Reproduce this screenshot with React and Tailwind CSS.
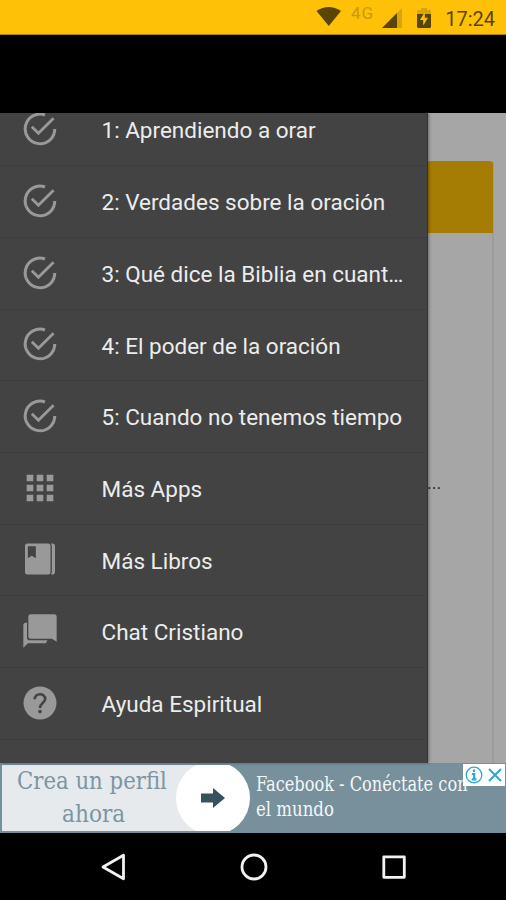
import React from "react";

const CheckIcon = () => (
  <svg viewBox="0 0 40 40" className="size-10" fill="none" stroke="currentColor">
    <path d="M25 6A14.8 14.8 0 1 0 34.8 20" strokeWidth="3" />
    <path d="M11.8 17.7L18.4 24.2L33.6 9.2" strokeWidth="2.8" />
  </svg>
);

const HelpIcon = () => (
  <svg viewBox="0 0 40 40" className="size-10">
    <circle cx="20" cy="20" r="16.5" fill="currentColor" />
    <path d="M14.8 16.2C14.8 9.6 25.2 9.600 25.200 16C25.200 19.600 20 20 20 25" fill="none" stroke="#434343" strokeWidth="2.600" />
    <circle cx="20" cy="28.600" r="1.800" fill="#434343" />
  </svg>
);

const MdIcon = ({ d }) => (
  <svg viewBox="0 0 24 24" className="size-10" fill="currentColor">
    <path d={d} fillRule="evenodd" />
  </svg>
);

const APPS =
  "M4 8h4V4H4v4zm6 12h4v-4h-4v4zm-6 0h4v-4H4v4zm0-6h4v-4H4v4zm6 0h4v-4h-4v4zm6-10v4h4V4h-4zm-6 4h4V4h-4v4zm6 6h4v-4h-4v4zm0 6h4v-4h-4v4z";
const BOOK =
  "M4.5 2.7h12.300a1.500 1.500 0 0 1 1.500 1.500v15.600a1.500 1.500 0 0 1-1.500 1.500h-12.300a1.500 1.500 0 0 1-1.500-1.500V4.200a1.500 1.500 0 0 1 1.500-1.500zM4.700 4.300v7.200l2.400-1.500 2.400 1.500v-7.200zM18.500 2.700h.8a1.700 1.700 0 0 1 1.700 1.700v15.200a1.700 1.700 0 0 1-1.700 1.700h-.8q.6-.7.6-1.700V4.400q0-1-.6-1.700z";
const CHAT =
  "M6.500 2h14a1.500 1.500 0 0 1 1.500 1.500V18.500l-2.800-1.900H6.500A1.500 1.500 0 0 1 5 15.100V3.500A1.500 1.500 0 0 1 6.500 2zM4.200 7v8.900a1.700 1.700 0 0 0 1.700 1.700H16.500l-1 1.700H4.800L2 22V8.500A1.500 1.500 0 0 1 3.500 7z";

const items = [
  { label: "1: Aprendiendo a orar", icon: <CheckIcon /> },
  { label: "2: Verdades sobre la oración", icon: <CheckIcon /> },
  { label: "3: Qué dice la Biblia en cuant…", icon: <CheckIcon /> },
  { label: "4: El poder de la oración", icon: <CheckIcon /> },
  { label: "5: Cuando no tenemos tiempo", icon: <CheckIcon /> },
  { label: "Más Apps", icon: <MdIcon d={APPS} /> },
  { label: "Más Libros", icon: <MdIcon d={BOOK} /> },
  { label: "Chat Cristiano", icon: <MdIcon d={CHAT} /> },
  { label: "Ayuda Espiritual", icon: <HelpIcon /> },
];

function StatusBar() {
  return (
    <header className="flex h-[35px] shrink-0 items-center border-b border-[#a98108] bg-[#ffc107] pr-[11px] pl-[316px] text-[#5a4509]">
      <svg viewBox="0 0 26 20" className="h-5 w-[26px]" fill="currentColor">
        <path d="M.5 4Q12.500-4 25 4L12.800 19z" />
      </svg>
      <span className="ml-[9px] -mt-[7px] w-[24px] text-[17px] leading-none tracking-[1px] text-[#c79a12]">4G</span>
      <svg viewBox="0 0 20 20" className="ml-[7px] mt-[2px] size-5">
        <path d="M0 20L20 0V20z" fill="#d6a50a" />
        <path d="M0 20L15 5V20z" fill="#5a4509" />
      </svg>
      <svg viewBox="0 0 14 20" className="ml-[15px] mt-px h-5 w-[14px]">
        <path d="M0 3.500a1.500 1.500 0 0 1 1.500-1.500H4V0h6v2h2.500A1.500 1.500 0 0 1 14 3.500V8H0z" fill="#d6a50a" />
        <path d="M0 6H14V18.500a1.500 1.500 0 0 1-1.500 1.500h-11A1.500 1.500 0 0 1 0 18.500z" fill="#5a4509" />
        <path d="M7.800 4L3 12h3.200v5.500L11 9.800H7.800z" fill="#ffc107" />
      </svg>
      <span className="ml-auto pt-[3px] text-[20px] leading-none">17:24</span>
    </header>
  );
}

function Drawer() {
  return (
    <nav className="z-10 w-[428px] shrink-0 overflow-hidden border-r border-[#333] bg-[#434343] shadow-[1px_0_3px_rgba(0,0,0,0.35)]">
      <ul className="-mt-[18px]">
        {items.map((item) => (
          <li key={item.label} className="flex h-[71.700px] items-center border-b border-[#3d3d3d] pl-5">
            <span className="-mt-px text-[#999]">{item.icon}</span>
            <span className="ml-[41.500px] whitespace-nowrap pt-[1.800px] text-[22.500px] leading-none text-[#ececec]">{item.label}</span>
          </li>
        ))}
      </ul>
    </nav>
  );
}

function AdBanner() {
  return (
    <section className="relative flex h-[70.500px] shrink-0 border-y-2 border-l-2 border-[#70919d] bg-[#78909c] font-['DejaVu_Serif_Condensed','DejaVu_Serif',serif]">
      <div className="flex w-[213px] shrink-0 flex-col bg-[#e6eaed] text-[25px] leading-[33px] text-[#7b96a1]">
        <span className="-mt-px ml-[15px] origin-left scale-x-[0.945] whitespace-nowrap">Crea un perfil</span>
        <span className="ml-[60px] origin-left scale-x-[0.965] whitespace-nowrap">ahora</span>
      </div>
      <div className="-ml-[39px] flex h-full w-[74px] shrink-0 items-center justify-center overflow-hidden">
        <div className="flex size-[74px] shrink-0 items-center justify-center rounded-full bg-white">
          <svg viewBox="0 0 24 20" className="h-5 w-6" fill="#37515d">
            <path d="M0 5.500H12V0L24 10L12 20V14.500H0z" />
          </svg>
        </div>
      </div>
      <div className="ml-[6px] flex flex-col pt-[7px] text-[20px] leading-[25px] text-[#f4f7f8]">
        <span className="origin-left scale-x-[0.900] whitespace-nowrap">Facebook - Conéctate con</span>
        <span className="origin-left scale-x-[0.920] whitespace-nowrap">el mundo</span>
      </div>
      <div className="absolute -top-px right-px flex h-[22px] w-[42px] items-center justify-between bg-white px-[2px]">
        <svg viewBox="0 0 18 18" className="size-[18px]" fill="none" stroke="#2fa9cc">
          <circle cx="9" cy="9" r="7.800" strokeWidth="1.300" />
          <path d="M9 3.500V6M7 8H9.200V13.200M6.800 13.300H11.500" strokeWidth="2.200" />
        </svg>
        <svg viewBox="0 0 14 14" className="mr-px size-[14px]" fill="none" stroke="#2fa9cc" strokeWidth="2">
          <path d="M1 1L13 13M13 1L1 13" />
        </svg>
      </div>
    </section>
  );
}

function NavBar() {
  return (
    <footer className="flex flex-1 items-start bg-black pt-[20px] pl-[100px]">
      <svg viewBox="0 0 28 28" className="size-7" fill="none" stroke="#f2f2f2" strokeWidth="2.800" strokeLinejoin="round">
        <path d="M3 14L23.500 2.200V25.800z" />
      </svg>
      <svg viewBox="0 0 28 28" className="ml-[111.500px] size-7" fill="none" stroke="#f2f2f2" strokeWidth="2.800">
        <circle cx="14" cy="14" r="12" />
      </svg>
      <svg viewBox="0 0 28 28" className="ml-[112.500px] size-7" fill="none" stroke="#f2f2f2" strokeWidth="2.800" strokeLinejoin="round">
        <path d="M3.800 3.800H24.300V24.300H3.800z" />
      </svg>
    </footer>
  );
}

export default function App() {
  return (
    <div className="flex h-[900px] w-[506px] flex-col overflow-hidden bg-black font-['Roboto','Noto_Sans',sans-serif]">
      <StatusBar />
      <div className="h-[77.500px] shrink-0 bg-black" />
      <div className="flex h-[650px] shrink-0 bg-[#a6a6a6]">
        <Drawer />
        <main className="min-w-0 flex-1 pt-[48.500px] pr-[12px]">
          <div className="h-[610px] border-r-2 border-[#9c9c9c]">
            <div className="-mr-px h-[71.500px] rounded-tr-sm bg-[#a67d04]" />
            <p className="-ml-px mt-[240.500px] text-[18px] leading-[20px] text-[#333]">...</p>
          </div>
        </main>
      </div>
      <AdBanner />
      <NavBar />
    </div>
  );
}
